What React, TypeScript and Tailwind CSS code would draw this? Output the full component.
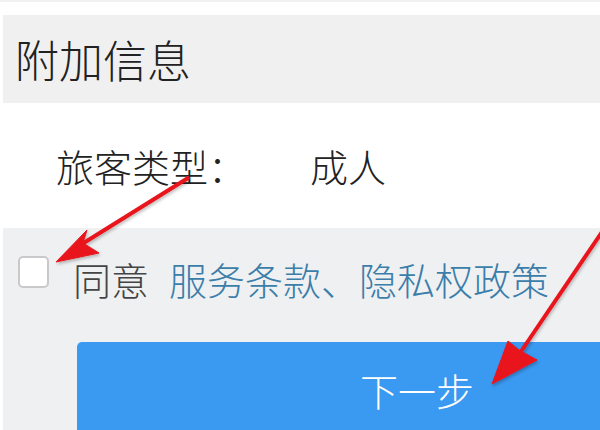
const cjk = { fontFamily: '"Noto Sans CJK SC", "Noto Sans", sans-serif' };

function Arrows() {
  return (
    <svg
      className="absolute inset-0 pointer-events-none"
      width="600"
      height="430"
      viewBox="0 0 600 430"
    >
      <defs>
        <filter id="sh" x="-20%" y="-20%" width="140%" height="140%">
          <feDropShadow dx="1" dy="2" stdDeviation="1.5" floodColor="#000" floodOpacity="0.25" />
        </filter>
      </defs>
      <g fill="#e8141c" stroke="#e8141c" filter="url(#sh)">
        <line x1="188" y1="178" x2="82" y2="244" strokeWidth="4" strokeLinecap="round" />
        <polygon points="56,262 87,230 83,243 99,253" strokeWidth="1" strokeLinejoin="round" />
        <line x1="606" y1="226" x2="522" y2="350" strokeWidth="4" strokeLinecap="round" />
        <polygon points="492,384 508,341 519,350 537,360" strokeWidth="1" strokeLinejoin="round" />
      </g>
    </svg>
  );
}

export default function App() {
  return (
    <div className="relative w-[600px] h-[430px] overflow-hidden bg-white flex flex-col font-light" style={cjk}>
      <div className="h-[15px] shrink-0 border-t-2 border-[#f1f1f1]" />
      <div className="ml-[3px] h-[88px] shrink-0 bg-[#f0f0f1] flex items-center pl-[12px] text-[44px] text-[#222]">
        附加信息
      </div>
      <div className="h-[125px] shrink-0 flex items-center pl-[56px] text-[38px] text-[#222]">
        <span className="w-[254px]">旅客类型：</span>
        <span>成人</span>
      </div>
      <div className="ml-[3px] flex-1 bg-[#eff0f2] flex flex-col">
        <div className="flex items-center mt-[30px] h-[40px]">
          <div className="ml-[15px] w-[31px] h-[32px] rounded-[5px] bg-white border-2 border-[#c9c9cc] -mt-[12px]" />
          <span className="ml-[24px] text-[38px] text-[#444]">同意</span>
          <span className="ml-[20px] text-[38px] text-[#3b7eaa]">服务条款、隐私权政策</span>
        </div>
        <div className="ml-[74px] mt-[44px] w-[680px] h-[100px] shrink-0 bg-[#3a99f1] rounded-tl-[5px] flex justify-center pt-[29px] text-[38px] text-white leading-none">
          下一步
        </div>
      </div>
      <Arrows />
    </div>
  );
}
